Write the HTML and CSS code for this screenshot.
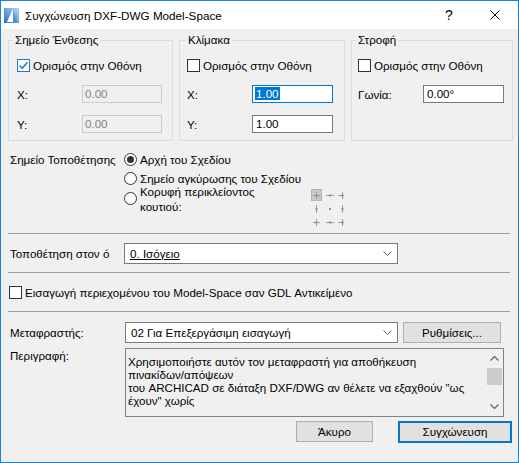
FILE: index.html
```html
<!DOCTYPE html>
<html lang="el">
<head>
<meta charset="utf-8">
<title>Συγχώνευση DXF-DWG Model-Space</title>
<link rel="stylesheet" href="styles.css">
</head>
<body>
<div class="window">
  <div class="titlebar">
    <svg class="app-icon" viewBox="0 0 15 15" width="15" height="15">
      <defs>
        <linearGradient id="ig" x1="0" y1="1" x2="1" y2="0">
          <stop offset="0" stop-color="#1f6fd0"/>
          <stop offset="1" stop-color="#b9d8f6"/>
        </linearGradient>
      </defs>
      <rect x="0" y="0" width="15" height="15" fill="url(#ig)"/>
      <polygon points="3,14 9,1 9,14" fill="#ffffff"/>
      <polygon points="9,3 13,14 9,14" fill="#4a8fe0"/>
    </svg>
    <span class="title">Συγχώνευση DXF-DWG Model-Space</span>
    <span class="cap-btn help">?</span>
    <span class="cap-btn close">
      <svg viewBox="0 0 10 10" width="10" height="10"><path d="M0.5 0.5 L9.5 9.5 M9.5 0.5 L0.5 9.5" stroke="#000" stroke-width="1" fill="none"/></svg>
    </span>
  </div>

  <div class="body">
    <div class="groups">
      <fieldset class="group g1">
        <legend>Σημείο Ένθεσης</legend>
        <div class="check-row">
          <span class="cb checked"><svg viewBox="0 0 11 11" width="11" height="11"><path d="M1.5 5.5 L4.2 8.2 L9.5 2.2" stroke="#1a6fc9" stroke-width="1.4" fill="none"/></svg></span>
          <span>Ορισμός στην Οθόνη</span>
        </div>
        <div class="field"><span class="flbl">X:</span><span class="input disabled w80">0.00</span></div>
        <div class="field"><span class="flbl">Y:</span><span class="input disabled w80">0.00</span></div>
      </fieldset>
      <fieldset class="group g2">
        <legend>Κλίμακα</legend>
        <div class="check-row">
          <span class="cb"></span>
          <span>Ορισμός στην Οθόνη</span>
        </div>
        <div class="field"><span class="flbl">X:</span><span class="input focused"><span class="sel">1.00</span></span></div>
        <div class="field"><span class="flbl">Y:</span><span class="input">1.00</span></div>
      </fieldset>
      <fieldset class="group g3">
        <legend>Στροφή</legend>
        <div class="check-row">
          <span class="cb"></span>
          <span>Ορισμός στην Οθόνη</span>
        </div>
        <div class="field"><span class="flbl">Γωνία:</span><span class="input">0.00°</span></div>
      </fieldset>
    </div>

    <div class="place">
      <div class="place-lbl">Σημείο Τοποθέτησης</div>
      <div class="radios">
        <div class="radio-row r1"><span class="rb on"></span><span>Αρχή του Σχεδίου</span></div>
        <div class="radio-row r2"><span class="rb"></span><span>Σημείο αγκύρωσης του Σχεδίου</span></div>
        <div class="radio-row r3">
          <span class="rb"></span>
          <span class="r3-text">Κορυφή περικλείοντος<br>κουτιού:</span>
          <svg class="anchor" viewBox="0 0 38 40" width="38" height="40">
            <rect x="1.5" y="1.5" width="10" height="11" fill="#c9c9c9" stroke="#b4b4b4"/>
            <g stroke="#9c9c9c" stroke-width="1" fill="none">
              <path d="M3 7.5 H10 M6.5 4 V11"/>
              <path d="M16 7.5 H24"/>
              <path d="M28 7.5 H34 M32.5 4 V11"/>
              <path d="M6.5 17 V25"/>
              <path d="M32.5 17 V25"/>
              <path d="M3 34.5 H10 M6.5 31 V38"/>
              <path d="M16 34.5 H24"/>
              <path d="M28 34.5 H34 M32.5 31 V38"/>
            </g>
            <g fill="#8e8e8e">
              <rect x="5.5" y="6.5" width="2" height="2"/>
              <rect x="19" y="6.5" width="2" height="2"/>
              <rect x="31.5" y="6.5" width="2" height="2"/>
              <rect x="5.5" y="20" width="2" height="2"/>
              <rect x="19" y="20" width="2" height="2"/>
              <rect x="31.5" y="20" width="2" height="2"/>
              <rect x="5.5" y="33.5" width="2" height="2"/>
              <rect x="19" y="33.5" width="2" height="2"/>
              <rect x="31.5" y="33.5" width="2" height="2"/>
            </g>
          </svg>
        </div>
      </div>
    </div>

    <div class="sep"></div>

    <div class="row story-row">
      <span class="row-lbl">Τοποθέτηση στον ό</span>
      <div class="combo w274">
        <span class="combo-text underline">0. Ισόγειο</span>
        <svg class="chev" viewBox="0 0 9 5" width="9" height="5"><path d="M0.5 0.5 L4.5 4.5 L8.5 0.5" stroke="#5a5a5a" fill="none"/></svg>
      </div>
    </div>

    <div class="sep sep2"></div>

    <div class="check-row gdl-row">
      <span class="cb"></span>
      <span>Εισαγωγή περιεχομένου του Model-Space σαν GDL Αντικείμενο</span>
    </div>

    <div class="sep sep3"></div>

    <div class="row trans-row">
      <span class="row-lbl wide">Μεταφραστής:</span>
      <div class="combo w273">
        <span class="combo-text">02 Για Επεξεργάσιμη εισαγωγή</span>
        <svg class="chev" viewBox="0 0 9 5" width="9" height="5"><path d="M0.5 0.5 L4.5 4.5 L8.5 0.5" stroke="#5a5a5a" fill="none"/></svg>
      </div>
      <div class="btn settings">Ρυθμίσεις...</div>
    </div>

    <div class="desc-row">
      <span class="row-lbl wide desc-lbl">Περιγραφή:</span>
      <div class="textarea">
        <div class="ta-text">Χρησιμοποιήστε αυτόν τον μεταφραστή για αποθήκευση<br>πινακίδων/απόψεων<br>του ARCHICAD σε διάταξη DXF/DWG αν θέλετε να εξαχθούν "ως<br>έχουν" χωρίς</div>
        <div class="scrollbar">
          <svg class="sb-arrow" viewBox="0 0 9 5" width="9" height="5"><path d="M0.5 4.5 L4.5 0.5 L8.5 4.5" stroke="#606060" stroke-width="1.2" fill="none"/></svg>
          <div class="sb-thumb"></div>
          <svg class="sb-arrow down" viewBox="0 0 9 5" width="9" height="5"><path d="M0.5 0.5 L4.5 4.5 L8.5 0.5" stroke="#606060" stroke-width="1.2" fill="none"/></svg>
        </div>
      </div>
    </div>

    <div class="buttons">
      <div class="btn cancel">Άκυρο</div>
      <div class="btn default">Συγχώνευση</div>
    </div>
  </div>
</div>
</body>
</html>
```

FILE: styles.css
```css
* { box-sizing: border-box; }
html, body { margin: 0; padding: 0; }
body {
  width: 519px;
  height: 463px;
  overflow: hidden;
  font-family: "Liberation Sans", Arial, sans-serif;
  font-size: 11.6px;
  color: #000;
  background: #fff;
}
.window {
  width: 519px;
  height: 463px;
  border: 1px solid #1883d7;
  background: #f0f0f0;
  display: flex;
  flex-direction: column;
}
.titlebar {
  height: 28px;
  flex: none;
  background: #fff;
  display: flex;
  align-items: center;
}
.app-icon { margin-left: 3px; margin-right: 6px; flex: none; }
.title { font-size: 11.7px; flex: 1; }
.cap-btn {
  width: 46px;
  height: 28px;
  display: flex;
  align-items: center;
  justify-content: center;
}
.help { font-size: 14px; }

.body {
  flex: 1;
  padding: 4px 5px 0 7px;
  display: flex;
  flex-direction: column;
}

.groups { display: flex; gap: 6px; }
.group {
  margin: 0;
  border: 1px solid #dcdcdc;
  height: 108px;
  min-width: 0;
  padding: 0 6px 0 8px;
}
.group legend { padding: 0 2px; line-height: 14px; }
.g1 { width: 165px; }
.g1 legend { margin-left: -4px; }
.g2 { width: 166px; padding-left: 7px; }
.g2 legend { margin-left: -1px; }
.g3 { width: 162px; padding-left: 6px; }
.g3 legend { margin-left: -2px; }

.check-row {
  display: flex;
  align-items: center;
  height: 15px;
  margin-top: 11px;
}
.cb {
  width: 13px;
  height: 13px;
  border: 1px solid #333;
  background: #fff;
  margin-right: 3px;
  flex: none;
  display: flex;
  align-items: center;
  justify-content: center;
}
.cb.checked { border-color: #2277cc; }

.field {
  display: flex;
  align-items: center;
  height: 18px;
  margin-top: 12px;
}
.flbl { width: 65px; flex: none; }
.input {
  width: 81px;
  height: 18px;
  border: 1px solid #7a7a7a;
  background: #fff;
  padding-left: 3px;
  line-height: 16px;
  flex: none;
}
.input.w80 { width: 80px; padding-left: 2px; }
.input.disabled { border-color: #cccccc; background: #f0f0f0; color: #838383; }
.input.focused { border-color: #0078d7; padding-left: 2px; }
.sel { background: #0078d7; color: #fff; padding: 0 1px; }

.place {
  display: flex;
  height: 92px;
  padding-top: 11px;
}
.place-lbl { width: 114px; margin-left: 2px; line-height: 15px; flex: none; }
.radios { display: flex; flex-direction: column; }
.radio-row { display: flex; align-items: center; line-height: 15px; }
.r2 { margin-top: 4px; }
.r3 { margin-top: -2px; align-items: flex-start; }
.rb {
  width: 13px;
  height: 13px;
  border: 1px solid #333;
  border-radius: 50%;
  background: #fff;
  margin-right: 3px;
  flex: none;
  display: flex;
  align-items: center;
  justify-content: center;
}
.rb.on::after {
  content: "";
  width: 7px;
  height: 7px;
  border-radius: 50%;
  background: #333;
}
.r3 .rb { margin-top: 8px; }
.r3-text { width: 171px; flex: none; }
.anchor { margin-top: 4px; margin-left: -1px; }

.sep { height: 1px; width: 502px; background: #a0a0a0; flex: none; }
.sep2 { margin-top: 8px; }
.sep3 { margin-top: 11px; }

.row { display: flex; align-items: center; }
.story-row { margin-top: 9px; height: 21px; }
.row-lbl { width: 114px; margin-left: 2px; flex: none; }
.row-lbl.wide { width: 115px; }
.combo {
  height: 21px;
  border: 1px solid #7a7a7a;
  background: #fff;
  display: flex;
  align-items: center;
  padding-left: 5px;
  padding-right: 5px;
  flex: none;
}
.combo.w274 { width: 274px; }
.combo.w273 { width: 273px; }
.combo-text { flex: 1; }
.underline { text-decoration: underline; }

.gdl-row { margin-top: 12px; }
.gdl-row .cb { margin-left: 1px; }

.trans-row { margin-top: 10px; height: 21px; }
.btn {
  height: 21px;
  border: 1px solid #adadad;
  background: #e1e1e1;
  display: flex;
  align-items: center;
  justify-content: center;
  flex: none;
}
.settings { width: 98px; margin-left: 5px; }

.desc-row { display: flex; margin-top: 5px; }
.desc-lbl { line-height: 15px; }
.textarea {
  width: 379px;
  height: 69px;
  border: 1px solid #828282;
  background: #f0f0f0;
  display: flex;
  flex: none;
}
.ta-text {
  flex: 1;
  padding: 6px 0 0 2px;
  line-height: 13px;
  white-space: nowrap;
  overflow: hidden;
}
.scrollbar {
  width: 17px;
  display: flex;
  flex-direction: column;
  align-items: center;
  flex: none;
}
.sb-arrow { margin-top: 7px; flex: none; }
.sb-arrow.down { margin-top: auto; margin-bottom: 7px; }
.sb-thumb { width: 15px; height: 17px; background: #cdcdcd; margin-top: 7px; }

.buttons {
  display: flex;
  justify-content: flex-end;
  align-items: center;
  height: 23px;
  margin-top: 3px;
  padding-right: 1px;
}
.cancel { width: 77px; margin-right: 25px; }
.default { width: 114px; height: 22px; border: 2px solid #0078d7; }
```
